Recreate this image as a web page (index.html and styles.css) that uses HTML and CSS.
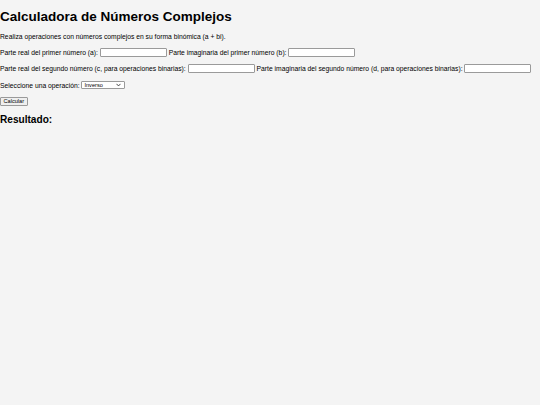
FILE: index.html
```html
<!DOCTYPE html>
<html lang="es">
<head>
<meta charset="utf-8">
<title>Calculadora de Números Complejos</title>
<link rel="stylesheet" href="styles.css">
</head>
<body>
<h1 class="title">Calculadora de Números Complejos</h1>
<p class="line">Realiza operaciones con números complejos en su forma binómica (a + bi).</p>
<p class="line row">
  <label class="lbl">Parte real del primer número (a):</label> <input class="field" type="text">
  <label class="lbl">Parte imaginaria del primer número (b):</label> <input class="field" type="text">
</p>
<p class="line row">
  <label class="lbl">Parte real del segundo número (c, para operaciones binarias):</label> <input class="field" type="text">
  <label class="lbl">Parte imaginaria del segundo número (d, para operaciones binarias):</label> <input class="field" type="text">
</p>
<p class="line sel-row">
  <label class="lbl">Seleccione una operación:</label>
  <select class="choice">
    <option>Inverso</option>
  </select>
</p>
<p class="line"><button class="btn" type="button">Calcular</button></p>
<h2 class="result">Resultado:</h2>
</body>
</html>
```

FILE: styles.css
```css
html, body {
  margin: 0;
  padding: 0;
}
body {
  background: #f4f4f4;
  color: #000;
  font-family: "Liberation Sans", Arial, sans-serif;
  font-size: 6.75px;
}
.title {
  font-size: 13.5px;
  font-weight: bold;
  margin: 9px 0;
}
.line {
  margin: 6.75px 0;
}
.row {
  margin: 7.5px 0;
}
.sel-row {
  margin: 7.5px 0;
}
.field {
  box-sizing: border-box;
  width: 67px;
  height: 9px;
  padding: 0 1px;
  border: 1px solid #9a9a9a;
  border-radius: 1px;
  background: #fff;
  font-size: 5.6px;
  vertical-align: middle;
}
.lbl {
  vertical-align: middle;
}
.choice {
  -webkit-appearance: none;
  appearance: none;
  box-sizing: border-box;
  width: 44px;
  height: 8.5px;
  padding: 0 0 0 2px;
  border: 1px solid #9a9a9a;
  border-radius: 1px;
  background: #fff url("data:image/svg+xml;utf8,<svg xmlns='http://www.w3.org/2000/svg' width='6' height='4' viewBox='0 0 6 4'><path d='M0.6 0.8 L3 3 L5.4 0.8' fill='none' stroke='%23222' stroke-width='0.9'/></svg>") no-repeat right 3px center;
  background-size: 5px 3.5px;
  font-family: "Liberation Sans", Arial, sans-serif;
  font-size: 5.6px;
  line-height: 6.5px;
  color: #000;
  vertical-align: middle;
}
.btn {
  box-sizing: border-box;
  height: 9px;
  padding: 0 2.5px;
  border: 1px solid #9a9a9a;
  border-radius: 1px;
  background: #efefef;
  font-family: "Liberation Sans", Arial, sans-serif;
  font-size: 5.6px;
  line-height: 1;
  color: #000;
}
.result {
  font-size: 10.1px;
  font-weight: bold;
  margin: 8.4px 0;
}
```
